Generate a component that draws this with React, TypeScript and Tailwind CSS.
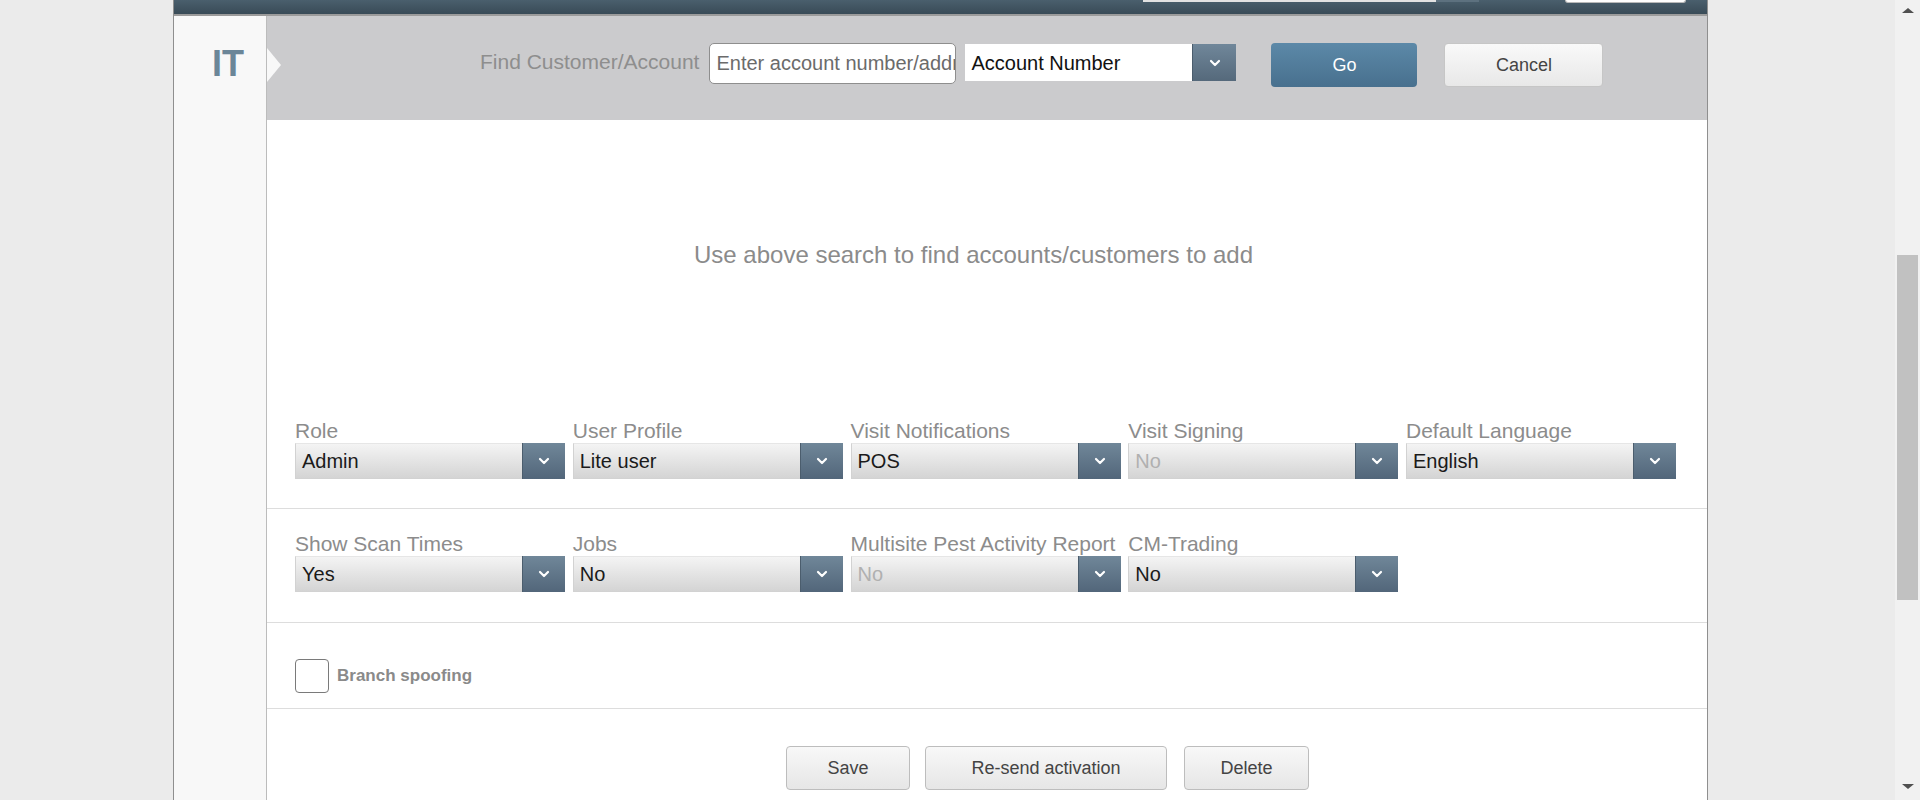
import React from "react";

function Chevron() {
  return (
    <svg width="12" height="8" viewBox="0 0 12 8" fill="none">
      <polyline points="2,2 6,6 10,2" stroke="#ffffff" strokeWidth="2.2" strokeLinecap="round" strokeLinejoin="round" />
    </svg>
  );
}

function Select({ value, disabled }: { value: string; disabled?: boolean }) {
  return (
    <div className="flex h-[36px] w-[270px]">
      <div
        className={`flex flex-1 items-center border border-r-0 border-[#d2d2d2] border-t-[#e6e6e6] bg-linear-to-b from-[#f4f4f4] to-[#d4d4d4] pl-[6px] text-[20px] leading-none ${
          disabled ? "text-[#b0b0b0]" : "text-[#1a1a1a]"
        }`}
      >
        {value}
      </div>
      <div className="flex w-[43px] items-center justify-center border-l border-[#4b5d6d] bg-linear-to-b from-[#708799] to-[#52667a]">
        <Chevron />
      </div>
    </div>
  );
}

function Field({ label, value, disabled }: { label: string; value: string; disabled?: boolean }) {
  return (
    <div className="flex w-[270px] flex-col">
      <div className="whitespace-nowrap text-[21px] leading-[24px] text-[#8c8c8c]">{label}</div>
      <Select value={value} disabled={disabled} />
    </div>
  );
}

function GreyButton({ label, w }: { label: string; w: string }) {
  return (
    <div
      className={`flex h-[44px] ${w} items-center justify-center rounded-[4px] border border-[#bdbdbd] bg-linear-to-b from-[#f8f8f8] to-[#e6e6e6] text-[18px] text-[#444]`}
    >
      {label}
    </div>
  );
}

export default function App() {
  return (
    <div
      className="flex h-[800px] w-[1920px] overflow-hidden bg-[#ebebeb]"
      style={{ fontFamily: '"Liberation Sans", Arial, sans-serif' }}
    >
      <div className="flex-1 overflow-hidden">
        <div className="ml-[173px] flex h-[800px] w-[1535px] flex-col border-x border-x-[#8f8f8f] bg-white">
          {/* top dark bar */}
          <div className="flex h-[16px] shrink-0 items-start border-b-2 border-[#9b9b9b] bg-linear-to-b from-[#4a5f6d] to-[#394b57]">
            <div className="ml-[969px] h-[2px] w-[293px] bg-[#e2e2e2]" />
            <div className="h-[2px] w-[43px] bg-[#5d717f]" />
            <div className="ml-[86px] h-[3px] w-[121px] rounded-b-[3px] border-x border-b border-[#b9b9b9] bg-white" />
          </div>

          <div className="flex flex-1">
            {/* sidebar */}
            <div className="w-[93px] shrink-0 border-r border-[#bcbcbc] bg-[#f8f8f8] pl-[38px] pt-[30px]">
              <div className="text-[36px] font-bold leading-[36px] text-[#6b8698]">IT</div>
            </div>

            {/* main */}
            <div className="flex flex-1 flex-col">
              {/* header */}
              <div className="relative flex h-[104px] items-start bg-[#cbcbcd] pl-[213px] pt-[27px]">
                <div className="absolute left-0 top-[32px] h-0 w-0 border-y-[17px] border-l-[14px] border-y-transparent border-l-[#f8f8f8]" />
                <div className="mt-[7px] whitespace-nowrap text-[21px] leading-[24px] text-[#8e8e8e]">
                  Find Customer/Account
                </div>
                <input
                  className="ml-[10px] h-[41px] w-[247px] rounded-[5px] border border-[#8e8e8e] bg-white pl-[6px] text-[20px] text-[#222] outline-none placeholder:text-[#6b6b6b]"
                  placeholder="Enter account number/address"
                  style={{ fontFamily: '"Liberation Sans", Arial, sans-serif' }}
                />
                <div className="ml-[9px] mt-[1px] flex h-[37px] w-[271px]">
                  <div className="flex flex-1 items-center bg-white pl-[6px] text-[20px] text-[#111]">Account Number</div>
                  <div className="flex w-[44px] items-center justify-center border-l border-[#4b5d6d] bg-linear-to-b from-[#70879a] to-[#55697b]">
                    <Chevron />
                  </div>
                </div>
                <div className="ml-[35px] flex h-[44px] w-[146px] items-center justify-center rounded-[4px] bg-linear-to-b from-[#5c89a8] to-[#48708e] text-[18px] text-white">
                  Go
                </div>
                <div className="ml-[27px] flex h-[44px] w-[159px] items-center justify-center rounded-[4px] border border-[#c6c6c6] bg-linear-to-b from-[#f9f9f9] to-[#e8e8e8] text-[18px] text-[#444]">
                  Cancel
                </div>
              </div>

              {/* message */}
              <div className="h-[275px] shrink-0 pr-[27px] pt-[121px] text-center text-[24px] leading-[28px] text-[#8b8b8b]">
                Use above search to find accounts/customers to add
              </div>

              {/* row 1 */}
              <div className="flex gap-[7.75px] border-b border-[#dddddd] pb-[29px] pl-[28px] pt-[24px]">
                <Field label="Role" value="Admin" />
                <Field label="User Profile" value="Lite user" />
                <Field label="Visit Notifications" value="POS" />
                <Field label="Visit Signing" value="No" disabled />
                <Field label="Default Language" value="English" />
              </div>

              {/* row 2 */}
              <div className="flex gap-[7.75px] border-b border-[#dddddd] pb-[30px] pl-[28px] pt-[23px]">
                <Field label="Show Scan Times" value="Yes" />
                <Field label="Jobs" value="No" />
                <Field label="Multisite Pest Activity Report" value="No" disabled />
                <Field label="CM-Trading" value="No" />
              </div>

              {/* row 3 */}
              <div className="flex items-center border-b border-[#dddddd] pb-[15px] pl-[28px] pt-[36px]">
                <div className="h-[34px] w-[34px] rounded-[4px] border-[1.5px] border-[#7a7a7a] bg-white" />
                <div className="ml-[8px] text-[17px] font-bold text-[#8a8a8a]">Branch spoofing</div>
              </div>

              {/* buttons */}
              <div className="flex pl-[519px] pt-[37px]">
                <GreyButton label="Save" w="w-[124px]" />
                <div className="ml-[15px]">
                  <GreyButton label="Re-send activation" w="w-[242px]" />
                </div>
                <div className="ml-[17px]">
                  <GreyButton label="Delete" w="w-[125px]" />
                </div>
              </div>
            </div>
          </div>
        </div>
      </div>

      {/* scrollbar */}
      <div className="flex h-[800px] w-[25px] shrink-0 flex-col items-center bg-[#f1f1f1]">
        <div className="mt-[8px] h-0 w-0 border-x-[6px] border-b-[5px] border-x-transparent border-b-[#505050]" />
        <div className="mt-[242px] h-[345px] w-[21px] bg-[#c1c1c1]" />
        <div className="mb-[11px] mt-auto h-0 w-0 border-x-[6px] border-t-[5px] border-x-transparent border-t-[#505050]" />
      </div>
    </div>
  );
}
